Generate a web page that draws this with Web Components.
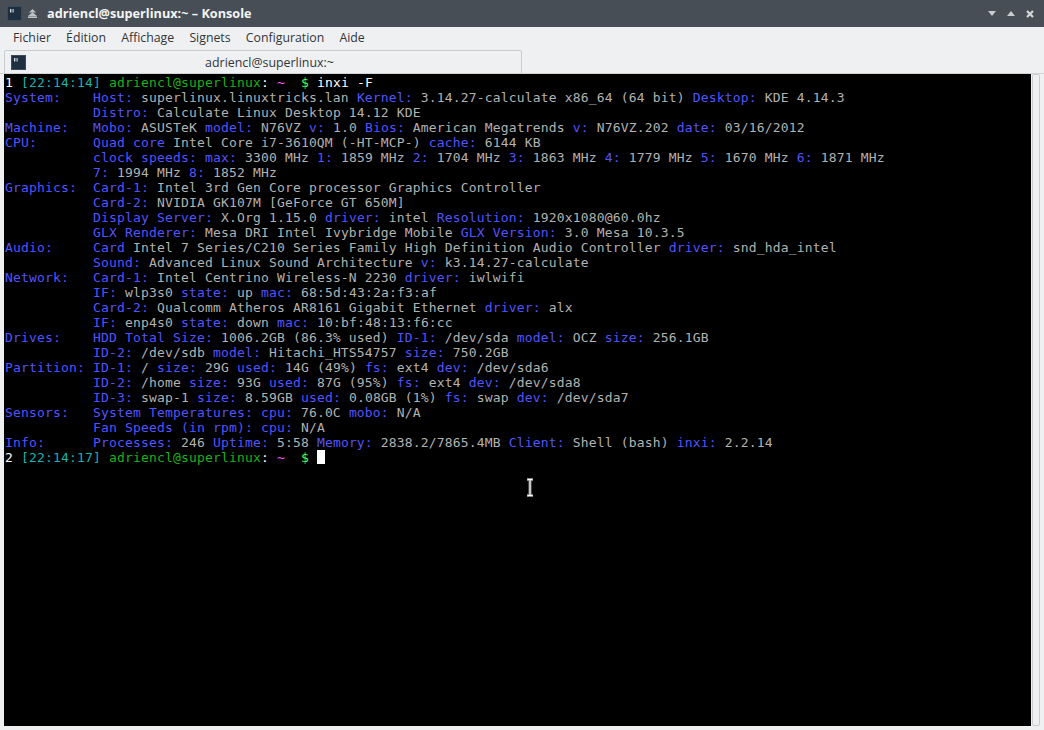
<!DOCTYPE html>
<html lang="fr">
<head>
<meta charset="utf-8">
<title>Konsole</title>
<style>
  html, body { margin: 0; height: 100%; background: #eff0f1; overflow: hidden; }
</style>
</head>
<body>
<konsole-window>
  <term-screen></term-screen>
</konsole-window>

<script>
// Small square terminal icon, used in the title bar and in the tab
const TERM_ICON = `
  <svg width="15" height="15" viewBox="0 0 15 15" aria-hidden="true">
    <rect x="0.5" y="0.5" width="14" height="14" fill="#1f2f42" stroke="#3d4a58"/>
    <rect x="3" y="3" width="1.4" height="3.5" fill="#d9dde0"/>
    <rect x="5.4" y="3" width="1.4" height="3.5" fill="#aeb5bb"/>
  </svg>`;

class TitleBar extends HTMLElement {
  constructor() {
    super();
    this.attachShadow({ mode: 'open' });
    this.shadowRoot.innerHTML = `
      <style>
        :host {
          display: flex;
          align-items: center;
          height: 27px;
          background: #474e55;
          color: #f4f5f6;
          font: bold 12.7px "Open Sans", sans-serif;
          padding: 0 10px 0 7px;
          box-sizing: border-box;
        }
        .above { margin: 0 10px 0 6px; display: block; }
        .title { flex: 1; white-space: nowrap; padding-bottom: 2px; }
        .buttons { display: flex; align-items: center; gap: 11px; }
        .buttons svg { display: block; }
      </style>
      ${TERM_ICON}
      <svg class="above" width="9" height="9" viewBox="0 0 9 9" aria-hidden="true">
        <path d="M4.5 0 L8 3.6 H1 Z" fill="#bfc3c6"/>
        <path d="M4.5 3.2 L9 7 H0 Z" fill="#bfc3c6"/>
        <rect x="0" y="7.4" width="9" height="1.6" fill="#bfc3c6"/>
      </svg>
      <span class="title">adriencl@superlinux:~ – Konsole</span>
      <div class="buttons">
        <svg width="8" height="5" viewBox="0 0 8 5"><path d="M0 0 H8 L4 5 Z" fill="#c9ccce"/></svg>
        <svg width="8" height="5" viewBox="0 0 8 5"><path d="M0 5 H8 L4 0 Z" fill="#c9ccce"/></svg>
        <svg width="8" height="8" viewBox="0 0 8 8"><path d="M1 1 L7 7 M7 1 L1 7" stroke="#d5d8da" stroke-width="2.2"/></svg>
      </div>
    `;
  }
}

class MenuBar extends HTMLElement {
  constructor() {
    super();
    this.attachShadow({ mode: 'open' });
    const items = ['Fichier', 'Édition', 'Affichage', 'Signets', 'Configuration', 'Aide'];
    this.shadowRoot.innerHTML = `
      <style>
        :host {
          display: flex;
          align-items: center;
          gap: 15.2px;
          height: 21px;
          padding: 0 0 0 13px;
          color: #31363b;
          font: 12.3px "Open Sans", sans-serif;
        }
      </style>
      ${items.map(i => `<span>${i}</span>`).join('')}
    `;
  }
}

class TabBar extends HTMLElement {
  constructor() {
    super();
    this.attachShadow({ mode: 'open' });
    this.shadowRoot.innerHTML = `
      <style>
        :host {
          display: flex;
          height: 26px;
          box-sizing: border-box;
          padding: 2px 4px 0 4px;
          border-bottom: 1px solid #d0d3d5;
        }
        .tab {
          width: 518px;
          box-sizing: border-box;
          display: flex;
          align-items: center;
          padding-left: 6px;
          background: #eff0f1;
          border: 1px solid #c9cccf;
          border-bottom: none;
          border-radius: 2px 2px 0 0;
          color: #31363b;
          font: 12.4px "Open Sans", sans-serif;
        }
        .label { flex: 1; text-align: center; padding-right: 8px; }
        svg { display: block; }
      </style>
      <div class="tab">${TERM_ICON}<span class="label">adriencl@superlinux:~</span></div>
    `;
  }
}

class KonsoleWindow extends HTMLElement {
  constructor() {
    super();
    this.attachShadow({ mode: 'open' });
    this.shadowRoot.innerHTML = `
      <style>
        :host {
          display: flex;
          flex-direction: column;
          width: 1044px;
          height: 730px;
          background: #eff0f1;
        }
        .body {
          flex: 1;
          min-height: 0;
          display: flex;
          gap: 1px;
          padding: 0 4px 4px 4px;
        }
        .scroll {
          width: 8px;
          border: 1px solid #c9cccf;
          border-radius: 2px;
          background: #eff0f1;
          box-sizing: border-box;
        }
        ::slotted(term-screen) { flex: 1; min-width: 0; }
      </style>
      <title-bar></title-bar>
      <menu-bar></menu-bar>
      <tab-bar></tab-bar>
      <div class="body">
        <slot></slot>
        <div class="scroll"></div>
      </div>
    `;
  }
}

// "|" toggles between the blue label colour and the grey value colour
const OUTPUT = [
  '|System:    Host:| superlinux.linuxtricks.lan |Kernel:| 3.14.27-calculate x86_64 (64 bit) |Desktop:| KDE 4.14.3',
  '           |Distro:| Calculate Linux Desktop 14.12 KDE',
  '|Machine:   Mobo:| ASUSTeK |model:| N76VZ |v:| 1.0 |Bios:| American Megatrends |v:| N76VZ.202 |date:| 03/16/2012',
  '|CPU:       Quad core| Intel Core i7-3610QM (-HT-MCP-) |cache:| 6144 KB',
  '           |clock speeds: max:| 3300 MHz |1:| 1859 MHz |2:| 1704 MHz |3:| 1863 MHz |4:| 1779 MHz |5:| 1670 MHz |6:| 1871 MHz',
  '           |7:| 1994 MHz |8:| 1852 MHz',
  '|Graphics:  Card-1:| Intel 3rd Gen Core processor Graphics Controller',
  '           |Card-2:| NVIDIA GK107M [GeForce GT 650M]',
  '           |Display Server:| X.Org 1.15.0 |driver:| intel |Resolution:| 1920x1080@60.0hz',
  '           |GLX Renderer:| Mesa DRI Intel Ivybridge Mobile |GLX Version:| 3.0 Mesa 10.3.5',
  '|Audio:     Card| Intel 7 Series/C210 Series Family High Definition Audio Controller |driver:| snd_hda_intel',
  '           |Sound:| Advanced Linux Sound Architecture |v:| k3.14.27-calculate',
  '|Network:   Card-1:| Intel Centrino Wireless-N 2230 |driver:| iwlwifi',
  '           |IF:| wlp3s0 |state:| up |mac:| 68:5d:43:2a:f3:af',
  '           |Card-2:| Qualcomm Atheros AR8161 Gigabit Ethernet |driver:| alx',
  '           |IF:| enp4s0 |state:| down |mac:| 10:bf:48:13:f6:cc',
  '|Drives:    HDD Total Size:| 1006.2GB (86.3% used) |ID-1:| /dev/sda |model:| OCZ |size:| 256.1GB',
  '           |ID-2:| /dev/sdb |model:| Hitachi_HTS54757 |size:| 750.2GB',
  '|Partition: ID-1:| / |size:| 29G |used:| 14G (49%) |fs:| ext4 |dev:| /dev/sda6',
  '           |ID-2:| /home |size:| 93G |used:| 87G (95%) |fs:| ext4 |dev:| /dev/sda8',
  '           |ID-3:| swap-1 |size:| 8.59GB |used:| 0.08GB (1%) |fs:| swap |dev:| /dev/sda7',
  '|Sensors:   System Temperatures: cpu:| 76.0C |mobo:| N/A',
  '           |Fan Speeds (in rpm): cpu:| N/A',
  '|Info:      Processes:| 246 |Uptime:| 5:58 |Memory:| 2838.2/7865.4MB |Client:| Shell (bash) |inxi:| 2.2.14',
];

class TermScreen extends HTMLElement {
  constructor() {
    super();
    this.attachShadow({ mode: 'open' });
    this.shadowRoot.innerHTML = `
      <style>
        :host {
          display: block;
          position: relative;
          background: #000;
          color: #b2b2b2;
          font: 13px "DejaVu Sans Mono", monospace;
          letter-spacing: 0.17px;
          overflow: hidden;
          padding-left: 1px;
        }
        .line { height: 15px; line-height: 17px; white-space: pre; }
        .l { color: #5454ff; }
        .w { color: #fff; }
        .c { color: #18b2b2; }
        .g { color: #18b218; }
        .m { color: #ff54ff; }
        .s { color: #54ff54; }
        .cursor {
          display: inline-block;
          width: 8px;
          height: 14px;
          background: #fff;
          vertical-align: -2px;
        }
        .ibeam { position: absolute; left: 522px; top: 404px; display: block; }
      </style>
      ${this.prompt(1, '22:14:14', '<span class="w">inxi -F</span>')}
      ${OUTPUT.map(l => this.outputLine(l)).join('')}
      ${this.prompt(2, '22:14:17', '<span class="cursor"></span>')}
      <svg class="ibeam" width="8" height="19" viewBox="0 0 8 19" aria-hidden="true">
        <path d="M1 1.5 H7 M1 17.5 H7 M4 1.5 V17.5" fill="none" stroke="#8a8a8a" stroke-width="3"/>
        <path d="M1.5 1.5 H6.5 M1.5 17.5 H6.5 M4 2 V17" fill="none" stroke="#fff" stroke-width="1"/>
      </svg>
    `;
  }

  prompt(n, time, rest) {
    return `<div class="line"><span class="w">${n}</span> <span class="c">[${time}]</span> <span class="g">adriencl@superlinux</span><span class="w">:</span> <span class="m">~</span>  <span class="s">$</span> ${rest}</div>`;
  }

  outputLine(text) {
    const parts = text.split('|');
    return `<div class="line">${parts.map((p, i) => i % 2 ? `<span class="l">${p}</span>` : p).join('')}</div>`;
  }
}

customElements.define('title-bar', TitleBar);
customElements.define('menu-bar', MenuBar);
customElements.define('tab-bar', TabBar);
customElements.define('term-screen', TermScreen);
customElements.define('konsole-window', KonsoleWindow);
</script>
</body>
</html>
